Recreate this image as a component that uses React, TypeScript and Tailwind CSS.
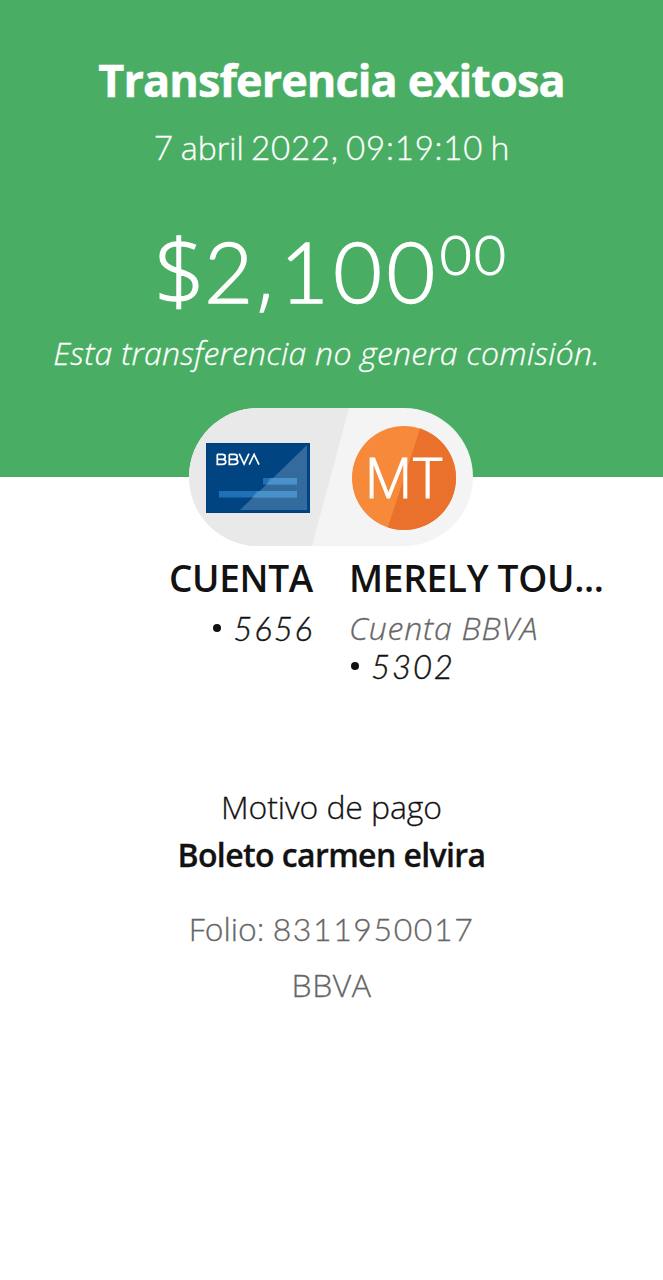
const text = "font-['Open_Sans','Noto_Sans',sans-serif]";
const digits = "font-['Lato','Open_Sans',sans-serif]";

function CardIcon() {
  return (
    <svg width="104" height="70" viewBox="0 0 104 70" className="block">
      <rect width="104" height="70" fill="#043e7c" />
      <rect x="1" y="1" width="102" height="68" fill="#004481" />
      <rect x="57" y="35" width="34" height="6.5" fill="#1f70b5" />
      <rect x="13" y="48" width="78" height="6.5" fill="#1f70b5" />
      <path d="M101 2V67H34Z" fill="#8aabcd" fillOpacity="0.38" />
      <path d="M64 35H91V41.5H60.500ZM51 48H91V54.500H46Z" fill="#4a9ad4" fillOpacity="0.6" />
      {/* wordmark strokes */}
      <g fill="none" stroke="#fff" strokeWidth="1.7">
        <path d="M11.300 11.300h5q3 0 3 2.500t-3 2.500h-5M16.300 16.300q3.500 0 3.500 2.500t-3.500 2.500h-5V11.300" />
        <path d="M23.300 11.300h5q3 0 3 2.500t-3 2.500h-5M28.300 16.300q3.500 0 3.500 2.500t-3.500 2.500h-5V11.300" />
        <path d="M33.200 10.700l4.900 10.300l4.900-10.300M43.200 21.700l4.900-10.300l4.900 10.300" />
      </g>
    </svg>
  );
}

function Avatar() {
  return (
    <div className="relative flex h-[104px] w-[104px] items-center justify-center overflow-hidden rounded-full bg-[#f7893b]">
      <svg width="104" height="104" viewBox="0 0 104 104" className="absolute inset-0">
        <path d="M69 0H104V104H35Z" fill="#ea712c" />
      </svg>
      <span className={`${text} relative -mt-[3px] text-[55px] font-light leading-none tracking-[1px] text-white [-webkit-text-stroke:1.2px_white]`}>
        MT
      </span>
    </div>
  );
}

function Route() {
  return (
    <div className="relative ml-[189px] flex h-[138px] w-[284px] items-center justify-between overflow-hidden rounded-full bg-[#f4f4f4] px-[17px] pt-[1px]">
      <svg width="284" height="138" viewBox="0 0 284 138" className="absolute inset-0">
        <path d="M0 0H160L123 138H0Z" fill="#e9e9e9" />
      </svg>
      <div className="relative">
        <CardIcon />
      </div>
      <Avatar />
    </div>
  );
}

function AccountNumber({ value }: { value: string }) {
  return (
    <span className="flex items-center gap-[12px]">
      <span className="h-2 w-2 rounded-full bg-[#121212]" />
      <span className={`${digits} -mr-[1px] text-[33px] font-light italic leading-[38px] tracking-[1.8px] [-webkit-text-stroke:0.4px_#121212]`}>
        {value}
      </span>
    </span>
  );
}

export default function App() {
  return (
    <div className={`${text} min-h-[1280px] w-[663px] overflow-hidden bg-white text-center text-[#121212]`}>
      <header className="flex h-[477px] flex-col items-center whitespace-nowrap bg-[#49ae64] text-white">
        <h1 className="mt-[50px] h-[60px] text-[45px] font-bold leading-[60px] tracking-[-0.9px] [-webkit-text-stroke:0.5px_white]">
          Transferencia exitosa
        </h1>
        <p className={`${digits} mt-[17px] h-[40px] text-[33px] font-light leading-[40px] tracking-[0.8px] [word-spacing:-2.500px] [-webkit-text-stroke:0.3px_white]`}>
          7 <span className={`${text} text-[32px] tracking-normal`}>abril</span> 2022, 09:19:10{' '}
          <span className={`${text} text-[32px] tracking-normal`}>h</span>
        </p>
        <div className={`${digits} mt-[54px] flex h-[100px] items-start font-light`}>
          <p className="h-[100px] text-[84px] leading-[100px] tracking-[4.500px] [-webkit-text-stroke:1.4px_white]">
            <span className={`${text} text-[89px] leading-none tracking-[-1px]`}>$</span>2
            <span className={`${text} text-[72px] leading-none tracking-[7px]`}>,</span>100
          </p>
          <span className="text-[55px] leading-[66px] tracking-[2.500px] [-webkit-text-stroke:1px_white]">00</span>
        </div>
        <p className="mt-[12px] mr-[10px] h-[40px] text-[32px] font-light italic leading-[40px] tracking-[0.25px] [-webkit-text-stroke:0.3px_white]">
          Esta transferencia no genera comisión.
        </p>
      </header>

      <div className="-mt-[69px]">
        <Route />
      </div>

      <section className="mt-[11px] flex gap-[36px] whitespace-nowrap">
        <div className="w-[313px] text-right">
          <h2 className="text-[37px] font-semibold leading-[42px] tracking-[-0.3px]">CUENTA</h2>
          <div className="mt-[10px] flex justify-end">
            <AccountNumber value="5656" />
          </div>
        </div>
        <div className="text-left">
          <h2 className="text-[37px] font-semibold leading-[42px] tracking-[-0.3px]">MERELY TOU...</h2>
          <p className="mt-[10px] text-[32px] font-light italic leading-[38px] tracking-[0.8px] text-[#666] [-webkit-text-stroke:0.3px_#666]">
            Cuenta BBVA
          </p>
          <div className="pl-[2px]">
            <AccountNumber value="5302" />
          </div>
        </div>
      </section>

      <section className="mt-[101px] whitespace-nowrap">
        <p className="text-[32px] font-light leading-[42px] tracking-[-0.1px] [-webkit-text-stroke:0.3px_#121212]">Motivo de pago</p>
        <p className="mt-[6px] text-[32px] font-semibold leading-[42px] tracking-[-0.6px] [-webkit-text-stroke:0.3px_#121212]">
          Boleto carmen elvira
        </p>
        <p className="mt-[32px] text-[32px] font-light leading-[42px] text-[#666] [-webkit-text-stroke:0.3px_#666]">
          Folio: <span className={`${digits} tracking-[1.6px]`}>8311950017</span>
        </p>
        <p className="mt-[14px] text-[32px] font-light leading-[42px] tracking-[0.5px] text-[#666] [-webkit-text-stroke:0.3px_#666]">BBVA</p>
      </section>
    </div>
  );
}
